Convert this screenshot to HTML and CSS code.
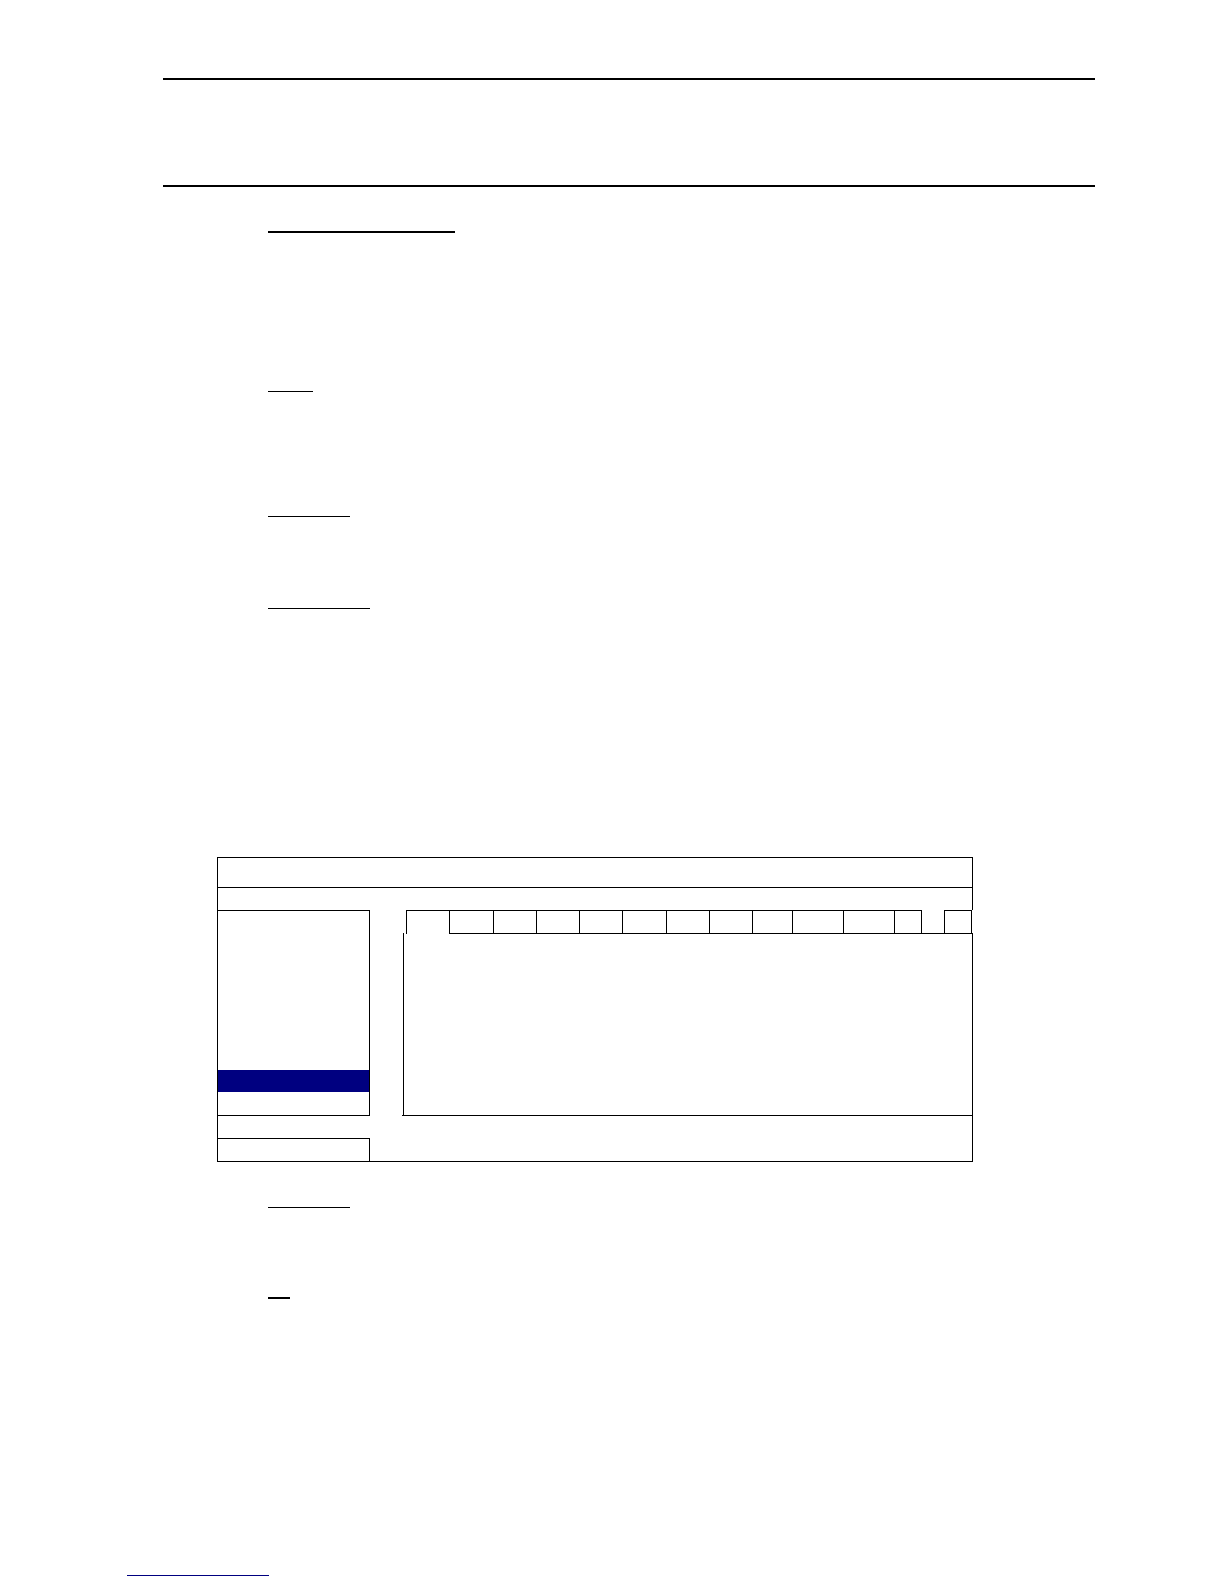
FILE: index.html
```
<!DOCTYPE html>
<html lang="en">
<head>
  <meta charset="UTF-8" />
  <meta name="viewport" content="width=device-width, initial-scale=1.0" />
  <title>Document</title>
  <link rel="stylesheet" href="styles.css">
</head>
<body>
  <header class="page-header"></header>

  <main class="content">
    <section class="section intro">
      <div class="heading heading-main"></div>
    </section>
    <section class="section part-one">
      <div class="heading heading-short"></div>
    </section>
    <section class="section part-two">
      <div class="heading heading-medium"></div>
    </section>
    <section class="section part-three">
      <div class="heading heading-long"></div>
    </section>

    <!-- Window diagram -->
    <div class="window">
      <div class="title-bar"></div>
      <div class="menu-bar"></div>
      <div class="window-body">
        <ul class="side-list">
          <li></li>
          <li></li>
          <li></li>
          <li></li>
          <li></li>
          <li></li>
          <li></li>
          <li class="selected"></li>
          <li></li>
        </ul>
        <div class="tab-area">
          <div class="tabs">
            <button type="button" class="tab active"></button>
            <button type="button" class="tab"></button>
            <button type="button" class="tab"></button>
            <button type="button" class="tab"></button>
            <button type="button" class="tab"></button>
            <button type="button" class="tab"></button>
            <button type="button" class="tab"></button>
            <button type="button" class="tab"></button>
            <button type="button" class="tab tab-narrow"></button>
            <button type="button" class="tab tab-wide"></button>
            <button type="button" class="tab tab-wide"></button>
            <button type="button" class="tab tab-small"></button>
            <span class="tab-gap"></span>
            <button type="button" class="tab tab-small"></button>
          </div>
          <div class="panel">
            <div class="panel-inner"></div>
          </div>
        </div>
      </div>
      <div class="status-row">
        <div class="status-box"></div>
      </div>
    </div>

    <section class="section part-four">
      <div class="heading heading-medium"></div>
    </section>
    <section class="section part-five">
      <div class="heading heading-tiny"></div>
    </section>
  </main>

  <footer class="page-footer">
    <a href="#" class="footer-link"></a>
  </footer>
</body>
</html>
```
FILE: styles.css
```
* {
  box-sizing: border-box;
}
body {
  font-family: "Liberation Sans", Arial, sans-serif;
  margin: 0;
  padding: 78px 129px 8px 127px;
  background-color: white;
  color: black;
}
.page-header {
  height: 109px;
  margin: 0 0 26px 36px;
  border-top: 2px solid black;
  border-bottom: 2px solid black;
}
.section {
  padding-left: 141px;
}
.heading {
  height: 20px;
  border-bottom: 1px solid black;
}
.heading-main {
  width: 187px;
  border-bottom-width: 2px;
}
.heading-short {
  width: 45px;
}
.heading-medium {
  width: 82px;
}
.heading-long {
  width: 102px;
}
.heading-tiny {
  width: 22px;
  border-bottom-width: 2px;
}
.intro {
  min-height: 159px;
}
.part-one {
  min-height: 125px;
}
.part-two {
  min-height: 92px;
}
.part-three {
  min-height: 268px;
}
.part-four {
  min-height: 91px;
}
.part-five {
  min-height: 277px;
}

/* window diagram */
.window {
  margin: 0 122px 26px 90px;
  border-left: 1px solid black;
  border-bottom: 1px solid black;
}
.title-bar,
.menu-bar {
  border-top: 1px solid black;
  border-right: 1px solid black;
}
.title-bar {
  height: 30px;
}
.menu-bar {
  height: 23px;
}
.window-body {
  display: flex;
  gap: 32px;
  height: 206px;
}
.side-list {
  display: flex;
  flex-direction: column;
  flex: none;
  width: 152px;
  margin: 0;
  padding: 0;
  list-style: none;
  border: 1px solid black;
  border-left: none;
}
.side-list li {
  flex: 1;
}
.side-list .selected {
  flex: none;
  height: 22px;
  background-color: #000080;
}
.tab-area {
  display: flex;
  flex-direction: column;
  flex: 1;
  min-width: 0;
}
.tabs {
  display: flex;
  height: 24px;
  margin: 0 1px -1px 4px;
}
.tab {
  flex: 1 1 43px;
  min-width: 0;
  padding: 0;
  background: none;
  border: 1px solid black;
  border-right: none;
  border-radius: 0;
}
.tab.active {
  border-bottom: none;
}
.tab-narrow {
  flex: none;
  width: 40px;
}
.tab-wide {
  flex: none;
  width: 51px;
}
.tab-small {
  flex: none;
  width: 28px;
  border-right: 1px solid black;
}
.tab-gap {
  flex: none;
  width: 22px;
  border-bottom: 1px solid black;
}
.panel {
  display: flex;
  flex: 1;
  padding-left: 1px;
  border-bottom: 1px solid black;
}
.panel-inner {
  flex: 1;
  border-left: 1px solid black;
  border-right: 1px solid black;
}
.status-row {
  display: flex;
  align-items: flex-end;
  height: 45px;
  border-right: 1px solid black;
}
.status-box {
  width: 152px;
  height: 23px;
  border-top: 1px solid black;
  border-right: 1px solid black;
}

.footer-link {
  display: block;
  width: 142px;
  height: 20px;
  border-bottom: 1px solid #000080;
}
```
